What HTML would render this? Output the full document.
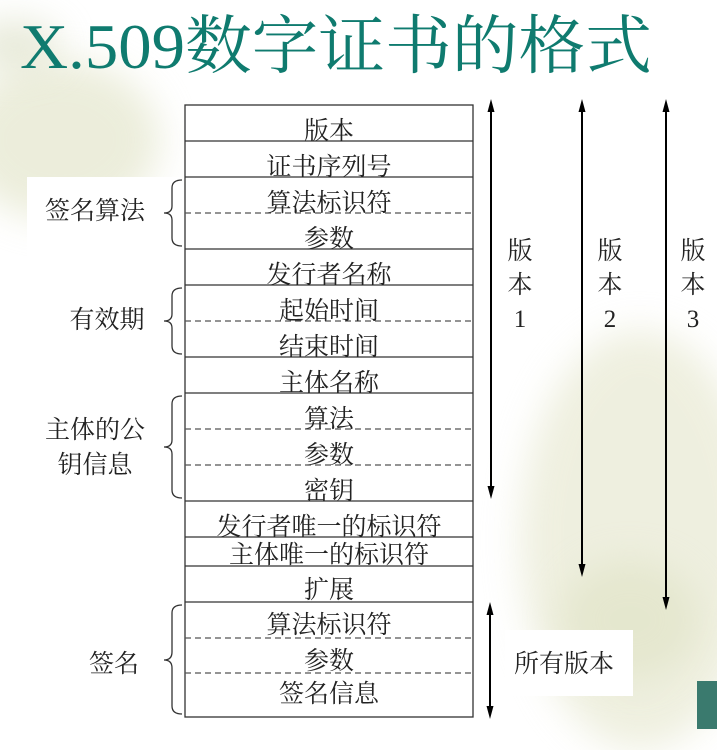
<!DOCTYPE html>
<html><head><meta charset="utf-8">
<style>
html,body{margin:0;padding:0;}
body{width:717px;height:729px;overflow:hidden;background:#fff;position:relative;font-family:"Liberation Serif","Noto Serif CJK SC",serif;}
.blob{position:absolute;border-radius:50%;filter:blur(18px);}
svg{position:absolute;left:0;top:0;}
</style></head><body>
<div class="blob" style="left:-40px;top:60px;width:200px;height:160px;background:#e4e6cc;opacity:.7"></div>
<div class="blob" style="left:-30px;top:20px;width:90px;height:50px;background:#d8dcc0;opacity:.6"></div>
<div class="blob" style="left:520px;top:330px;width:240px;height:420px;background:#e8e9d2;opacity:.7"></div>
<div class="blob" style="left:560px;top:560px;width:140px;height:120px;background:#dfe2c4;opacity:.6"></div>
<div style="position:absolute;left:27px;top:177px;width:155px;height:545px;background:#fff"></div>
<div style="position:absolute;left:697px;top:681px;width:20px;height:48px;background:#3a7a6e"></div>
<svg width="717" height="729" xmlns="http://www.w3.org/2000/svg">
<text x="20" y="68" font-size="64" fill="#0f7b6f" font-family="Liberation Serif, Noto Serif CJK SC, serif" textLength="632" lengthAdjust="spacingAndGlyphs">X.509数字证书的格式</text>
<rect x="505" y="630" width="128" height="66" fill="#fff"/>
<g stroke="#333" stroke-width="1.3" fill="none">
<rect x="185" y="105" width="288" height="612" fill="#fff"/>
<line x1="185" y1="141" x2="473" y2="141"/>
<line x1="185" y1="177" x2="473" y2="177"/>
<line x1="185" y1="249" x2="473" y2="249"/>
<line x1="185" y1="285" x2="473" y2="285"/>
<line x1="185" y1="357" x2="473" y2="357"/>
<line x1="185" y1="393" x2="473" y2="393"/>
<line x1="185" y1="501" x2="473" y2="501"/>
<line x1="185" y1="537" x2="473" y2="537"/>
<line x1="185" y1="566" x2="473" y2="566"/>
<line x1="185" y1="602" x2="473" y2="602"/>
<g stroke-dasharray="6,4" stroke="#555">
<line x1="185" y1="213" x2="473" y2="213"/>
<line x1="185" y1="321" x2="473" y2="321"/>
<line x1="185" y1="429" x2="473" y2="429"/>
<line x1="185" y1="465" x2="473" y2="465"/>
<line x1="185" y1="638" x2="473" y2="638"/>
<line x1="185" y1="673" x2="473" y2="673"/>
</g>
<path d="M182 180 Q172 180 172 188 L172 206 Q172 213 164 213 Q172 213 172 220 L172 238 Q172 246 182 246"/>
<path d="M182 288 Q172 288 172 296 L172 314 Q172 321 164 321 Q172 321 172 328 L172 346 Q172 354 182 354"/>
<path d="M182 396 Q172 396 172 404 L172 440 Q172 447 164 447 Q172 447 172 454 L172 490 Q172 498 182 498"/>
<path d="M182 605 Q172 605 172 613 L172 652 Q172 660 164 660 Q172 660 172 668 L172 706 Q172 714 182 714"/>
</g>
<g stroke="#000" stroke-width="2">
<line x1="491" y1="110" x2="491" y2="490"/>
<line x1="582" y1="110" x2="582" y2="568"/>
<line x1="666" y1="110" x2="666" y2="600"/>
<line x1="490" y1="612" x2="490" y2="708"/>
</g>
<g fill="#000">
<path d="M491 99 L487.5 112 L494.5 112Z"/><path d="M491 499 L487.5 486 L494.5 486Z"/>
<path d="M582 99 L578.5 112 L585.5 112Z"/><path d="M582 577 L578.5 564 L585.5 564Z"/>
<path d="M666 99 L662.5 112 L669.5 112Z"/><path d="M666 610 L662.5 597 L669.5 597Z"/>
<path d="M490 602 L486.5 615 L493.5 615Z"/><path d="M490 719 L486.5 706 L493.5 706Z"/>
</g>
<g font-size="25" fill="#222" text-anchor="middle" font-family="Liberation Serif, Noto Serif CJK SC, serif">
<text x="329" y="139">版本</text>
<text x="329" y="175">证书序列号</text>
<text x="329" y="211">算法标识符</text>
<text x="329" y="247">参数</text>
<text x="329" y="283">发行者名称</text>
<text x="329" y="319">起始时间</text>
<text x="329" y="355">结束时间</text>
<text x="329" y="391">主体名称</text>
<text x="329" y="427">算法</text>
<text x="329" y="463">参数</text>
<text x="329" y="499">密钥</text>
<text x="329" y="535">发行者唯一的标识符</text>
<text x="329" y="563">主体唯一的标识符</text>
<text x="329" y="598">扩展</text>
<text x="329" y="633">算法标识符</text>
<text x="329" y="669">参数</text>
<text x="329" y="702">签名信息</text>
<text x="95" y="219">签名算法</text>
<text x="107" y="328">有效期</text>
<text x="95" y="438">主体的公</text>
<text x="95" y="473">钥信息</text>
<text x="114" y="672">签名</text>
<text x="520" y="259">版</text><text x="520" y="293">本</text><text x="520" y="327">1</text>
<text x="610" y="259">版</text><text x="610" y="293">本</text><text x="610" y="327">2</text>
<text x="693" y="259">版</text><text x="693" y="293">本</text><text x="693" y="327">3</text>
<text x="564" y="672">所有版本</text>
</g>
</svg>
</body></html>
